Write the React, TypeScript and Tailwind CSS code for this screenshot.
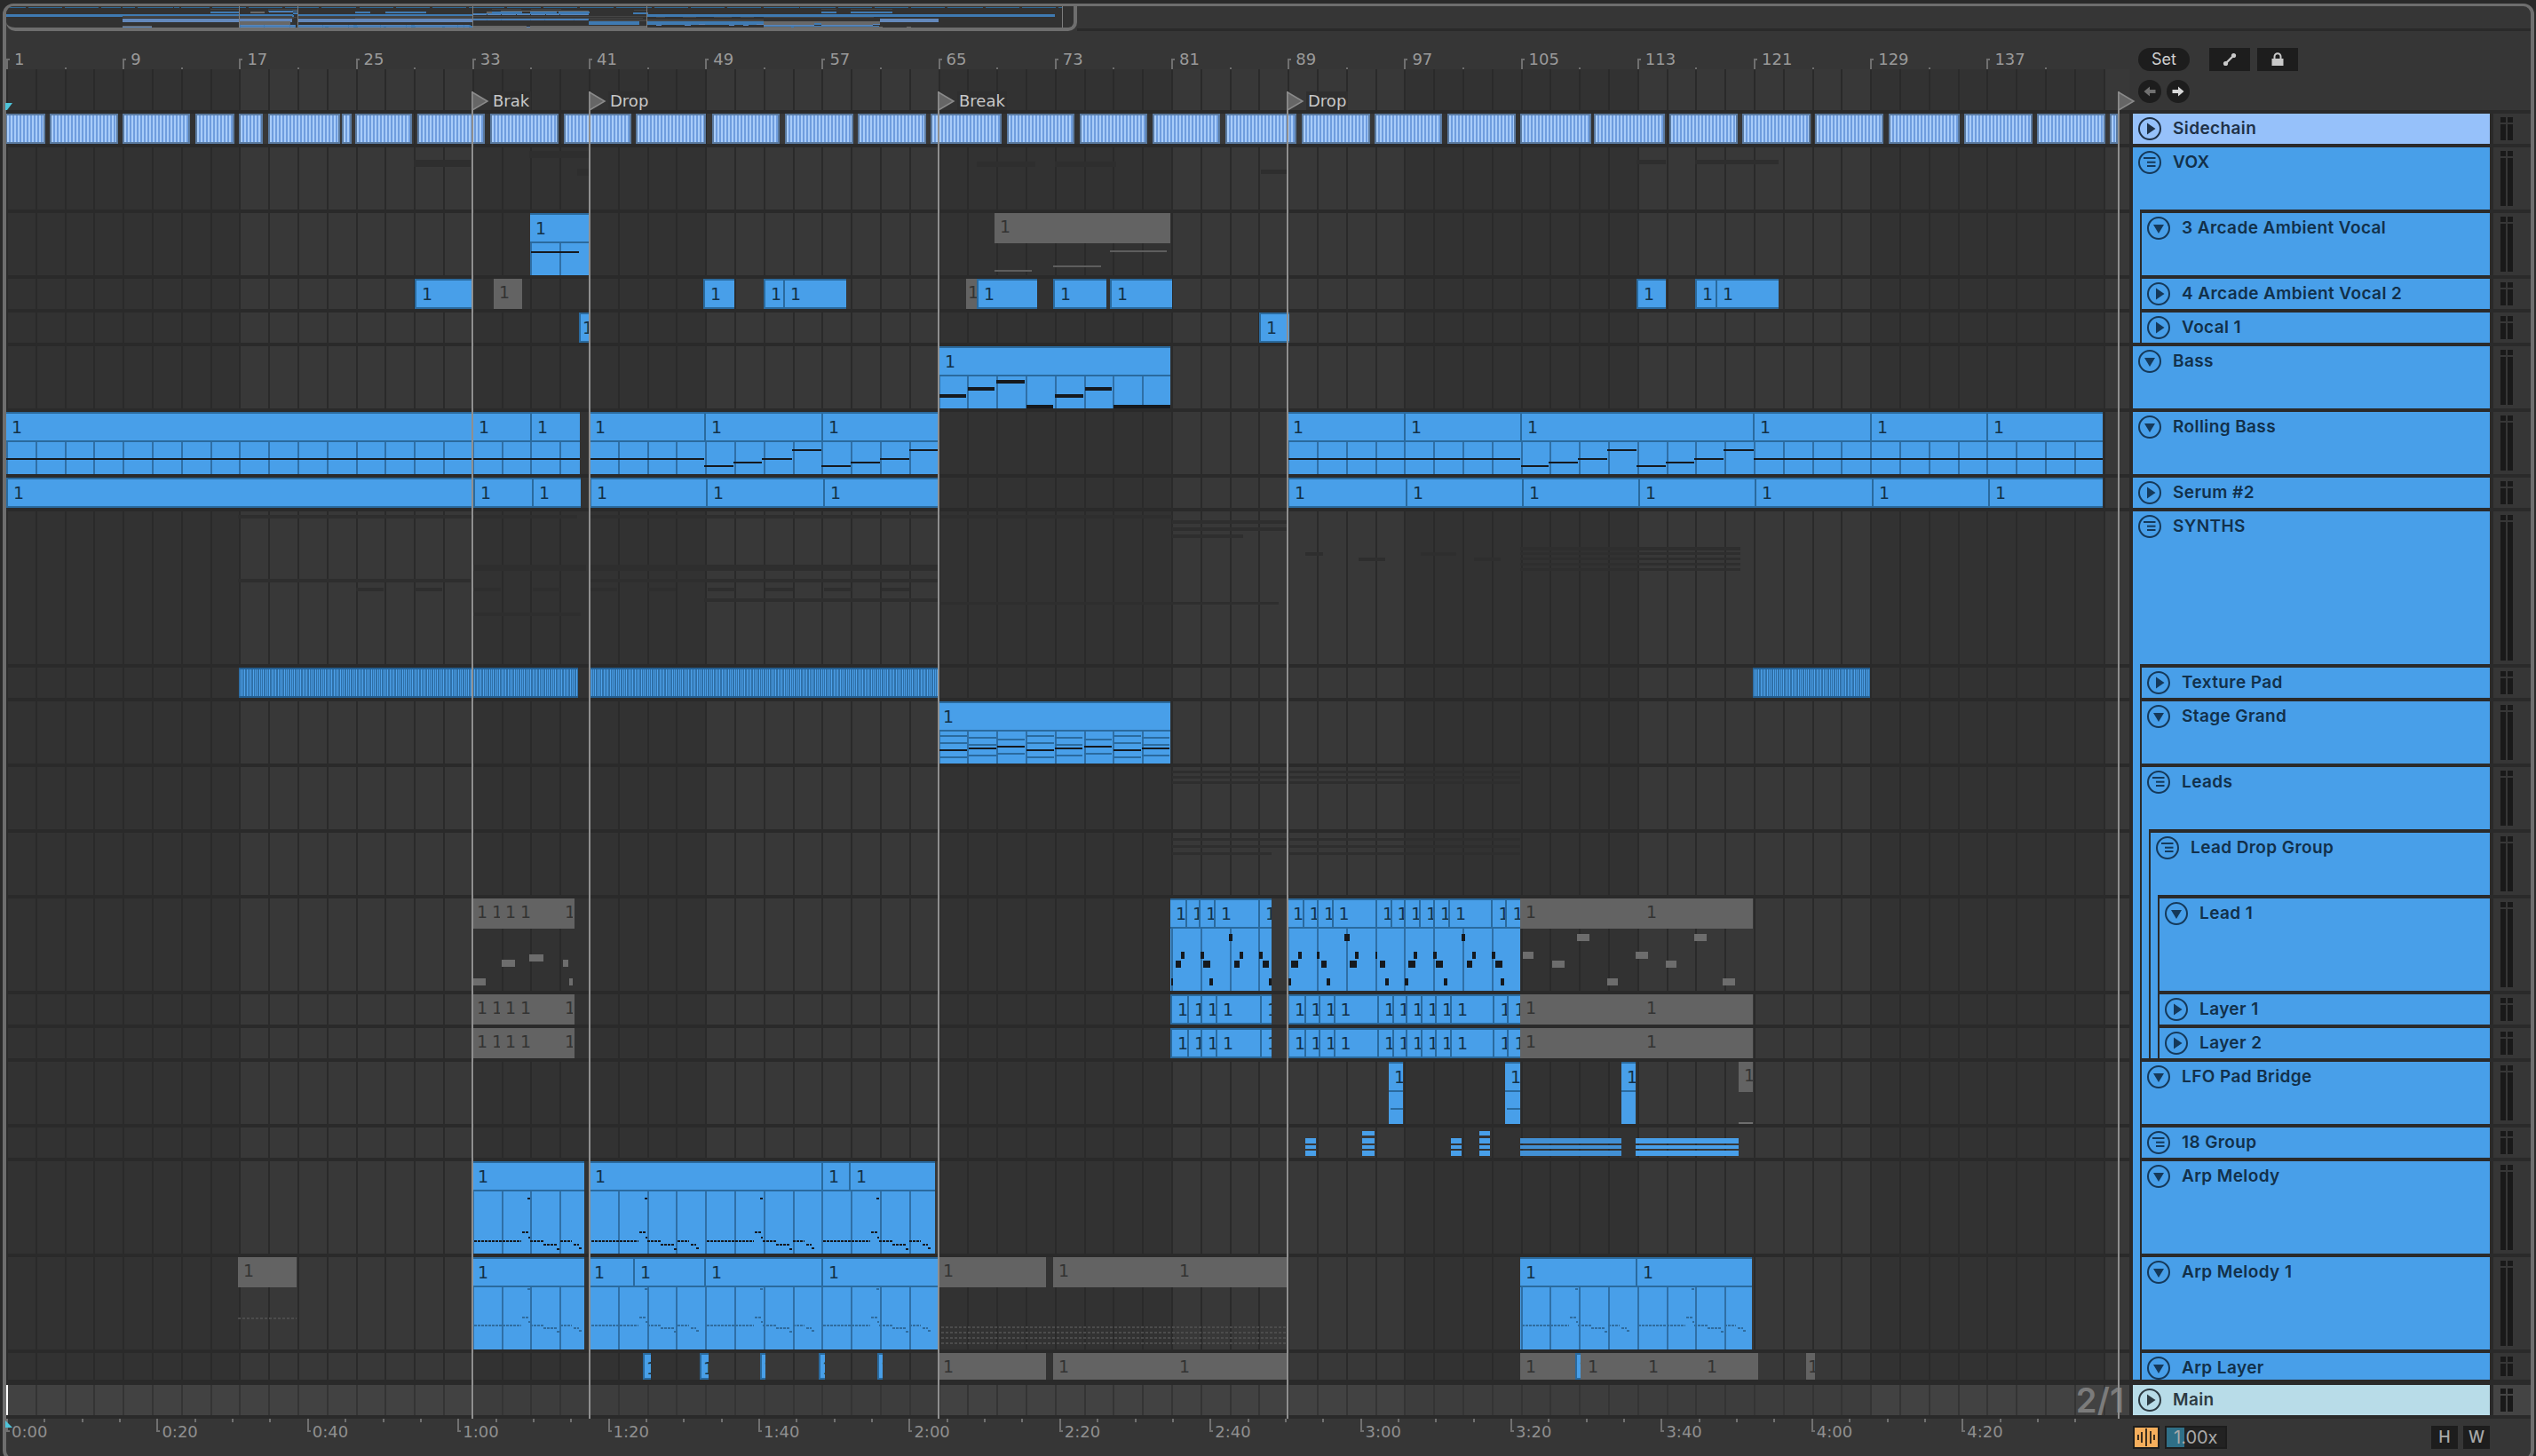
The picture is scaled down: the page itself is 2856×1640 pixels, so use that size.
import React from "react";

type Item =
  | { t: "c"; a: number; b: number; splits: number[]; gray: boolean }
  | { t: "n"; a: number; b: number; y: number; h: number; cls: string }
  | { t: "s"; a: number; b: number }
  | { t: "x"; a: number; b: number };

type Row = {
  name: string;
  h: number;
  level: number;
  icon: "play" | "down" | "group";
  sep?: number;
  tone?: "side" | "main";
  items: Item[];
};

const C = (a: number, b: number, splits: number[] = []): Item => ({ t: "c", a, b, splits, gray: false });
const G = (a: number, b: number, splits: number[] = []): Item => ({ t: "c", a, b, splits, gray: true });
const N = (a: number, b: number, y: number, h = 4, cls = "dark"): Item => ({ t: "n", a, b, y, h, cls });
const F = (a: number, b: number, y: number, h = 4): Item => N(a, b, y, h, "faint");
const S = (a: number, b: number): Item => ({ t: "s", a, b });
const X = (a: number, b: number): Item => ({ t: "x", a, b });

const noteCls: Record<string, string> = {
  dark: "bg-[#15191e]",
  gray: "bg-[#6d6d6d]",
  grayLine: "bg-[#5e5e5e]",
  faint: "bg-[#2e2e2e]",
  blue: "bg-[#489fe9]",
  blueDim: "bg-[#4290d4]",
  edge: "bg-[#2a6a9e]",
  dash: "bg-[repeating-linear-gradient(90deg,#15191e_0,#15191e_3px,transparent_3px,transparent_4px)]",
  dashFaint: "bg-[repeating-linear-gradient(90deg,#2f6c9f_0,#2f6c9f_3px,transparent_3px,transparent_4px)]",
  dashGray: "bg-[repeating-linear-gradient(90deg,#4c4c4c_0,#4c4c4c_3px,transparent_3px,transparent_5px)]",
};

const sidechainSegs = [
  [6, 51], [56, 133], [138, 214], [220, 264], [269, 296], [302, 383], [385, 396], [400, 464], [470, 546], [552, 629], [635, 711], [716, 795],
  [802, 878], [884, 961], [966, 1043], [1048, 1128], [1134, 1210], [1216, 1292], [1298, 1374], [1380, 1460], [1466, 1543], [1548, 1624],
  [1630, 1707], [1712, 1792], [1795, 1875], [1880, 1957], [1962, 2039], [2044, 2121], [2127, 2207], [2212, 2289], [2294, 2371], [2376, 2385],
];

const step = (list: [number, number, number][], h: number) => list.map(([a, b, y]) => N(a, b, y, h));

const rollingNotes = step(
  [
    [7, 653, 52], [664, 793, 52], [793, 826, 60], [826, 858, 56], [858, 892, 52], [892, 925, 42],
    [925, 958, 60], [958, 991, 56], [991, 1024, 52], [1024, 1056, 42],
    [1450, 1712, 52], [1713, 1744, 60], [1744, 1777, 56], [1777, 1810, 52], [1810, 1843, 42],
    [1843, 1876, 60], [1876, 1908, 56], [1908, 1941, 52], [1941, 1975, 42], [1975, 2368, 52],
  ],
  2
);

const leadY: Record<number, number> = { 228: 40, 288: 60, 318: 70, 378: 90 };
const leadPts: [number, number, number][] = [
  [45, 378, 2], [60, 318, 6], [72, 288, 4], [120, 288, 4], [133, 318, 8], [143, 378, 4], [192, 228, 4], [208, 318, 6], [219, 288, 4],
  [268, 288, 4], [280, 318, 7], [293, 378, 3], [340, 378, 4], [353, 318, 8], [368, 288, 4], [414, 288, 3], [428, 318, 6], [440, 378, 4],
  [486, 228, 6], [502, 318, 8], [510, 288, 4], [561, 288, 2], [575, 318, 6], [587, 378, 4], [636, 378, 4], [650, 318, 8], [658, 288, 4],
  [707, 288, 4], [720, 318, 8], [735, 378, 4], [779, 228, 4], [795, 318, 6], [806, 288, 4], [855, 288, 4], [868, 318, 8], [879, 378, 4],
];
const leadGray: [number, number, number][] = [
  [930, 288, 12], [1003, 318, 14], [1066, 228, 14], [1142, 378, 12], [1214, 288, 14], [1290, 318, 12], [1362, 228, 14], [1434, 378, 14],
];
const leadNotes: Item[] = [
  ...leadPts.map(([z, yy, w]) => {
    const x = 1300 + z / 2.24;
    return N(x - w / 2, x + w / 2, leadY[yy], 8, "dark");
  }),
  ...leadGray.map(([z, yy, w]) => {
    const x = 1300 + z / 2.24;
    return N(x, x + w, leadY[yy], 8, "gray");
  }),
  N(533, 547, 90, 8, "gray"), N(565, 580, 69, 8, "gray"), N(596, 612, 63, 8, "gray"), N(634, 640, 69, 8, "gray"), N(641, 645, 90, 8, "gray"),
];

const arpPattern: [number, number, number][] = [
  [2, 55, 89], [56, 63, 79], [62, 65, 41], [63, 65, 85], [65, 80, 89], [80, 95, 93], [95, 98, 98], [99, 112, 89], [114, 120, 93], [120, 124, 97],
];
const arp = (starts: number[], cls: string, k: number, max = 99999) =>
  starts.flatMap((s) =>
    arpPattern
      .filter(([a]) => s + a < max)
      .map(([a, b, y]) => N(s + a, Math.min(s + b, max), y * k, 2, cls))
  );

const leadSplitsA = [1335, 1350, 1367, 1417];
const leadSplitsB = [1466.5, 1483, 1499.5, 1549, 1565.6, 1581, 1598, 1614, 1631, 1679.5, 1695.5];
const leadGraySplits = [548, 563, 580, 630, 645];

const rows: Row[] = [
  { name: "Sidechain", h: 34, level: 0, icon: "play", tone: "side", items: sidechainSegs.map(([a, b]) => S(a, b)) },
  {
    name: "VOX", h: 70, level: 0, icon: "group",
    items: [F(596, 663, 4, 8), F(466, 530, 14, 8), F(650, 663, 24, 8), F(1100, 1166, 16, 6), F(1188, 1257, 16, 6), F(1843, 1876, 14, 5), F(1909, 2003, 14, 5), F(1420, 1450, 25, 5)],
  },
  {
    name: "3 Arcade Ambient Vocal", h: 70, level: 1, icon: "down",
    items: [C(597, 663), N(598, 652, 43, 2), G(1120, 1318), N(1250, 1314, 42, 2, "grayLine"), N(1186, 1240, 59, 2, "grayLine"), N(1120, 1162, 64, 2, "grayLine")],
  },
  {
    name: "4 Arcade Ambient Vocal 2", h: 34, level: 1, icon: "play",
    items: [C(467, 531), G(556, 588), C(792, 827), C(860, 882), C(882, 953), G(1088, 1100), C(1100, 1168), C(1186, 1246), C(1250, 1320), C(1843, 1876), C(1909, 1932), C(1932, 2003)],
  },
  { name: "Vocal 1", h: 34, level: 1, icon: "play", items: [C(652, 663), C(1418, 1452)] },
  {
    name: "Bass", h: 70, level: 0, icon: "down",
    items: [
      C(1058, 1318),
      ...step([[1058, 1088, 54], [1090, 1120, 46], [1122, 1154, 38], [1156, 1186, 66], [1188, 1220, 54], [1222, 1252, 46], [1254, 1318, 66]], 4),
    ],
  },
  {
    name: "Rolling Bass", h: 70, level: 0, icon: "down",
    items: [C(7, 653, [531, 597]), C(664, 1056, [793, 925]), C(1450, 2368, [1581, 1712, 1974, 2106, 2237]), ...rollingNotes],
  },
  {
    name: "Serum #2", h: 34, level: 0, icon: "play",
    items: [C(7, 654, [531, 597]), C(664, 1056, [793, 925]), C(1450, 2368, [1581, 1712, 1843, 1974, 2106, 2237])],
  },
  {
    name: "SYNTHS", h: 172, level: 0, icon: "group",
    items: [
      F(268, 650, 4), F(664, 1056, 4), F(531, 660, 60, 7), F(664, 1056, 60, 7), F(268, 530, 76), F(664, 1056, 76),
      ...[401, 467, 533, 600, 664, 730, 797, 862, 928, 993].map((x) => F(x, x + 31, 86)),
      F(793, 1056, 98), F(531, 654, 114),
      F(1320, 1450, 10), F(1320, 1450, 18), F(1320, 1400, 26), F(1056, 1320, 4),
      F(1470, 1490, 46), F(1530, 1560, 52), F(1600, 1640, 46), F(1660, 1690, 52),
      F(1712, 1960, 40), F(1712, 1960, 46, 3), F(1712, 1960, 52, 3), F(1712, 1960, 58, 3), F(1712, 1960, 64, 3),
      F(1056, 1440, 102, 3),
    ],
  },
  { name: "Texture Pad", h: 34, level: 1, icon: "play", items: [X(269, 651), X(664, 1056), X(1974, 2106)] },
  {
    name: "Stage Grand", h: 70, level: 1, icon: "down",
    items: [
      C(1056, 1318),
      ...[0, 1, 2, 3, 4, 5, 6, 7].flatMap((i) => {
        const a = 1058 + i * 32.6;
        const d = [0, 2, 4, 0, 2, 4, 0, 2][i];
        return [N(a, a + 31, 38 + d, 2, "edge"), N(a, a + 31, 46 + d, 2, "edge"), N(a, a + 31, 54 - d, 2, "dark"), N(a, a + 31, 62 - d, 2, "edge")];
      }),
    ],
  },
  { name: "Leads", h: 70, level: 1, icon: "group", items: [F(1320, 1712, 4, 3), F(1320, 1712, 10, 3), F(1320, 1712, 16, 3)] },
  { name: "Lead Drop Group", h: 70, level: 2, icon: "group", items: [F(1320, 1712, 6, 3), F(1320, 1712, 14, 3), F(1320, 1432, 22, 3), F(1450, 1712, 22, 3)] },
  {
    name: "Lead 1", h: 104, level: 3, icon: "down",
    items: [G(531, 647, leadGraySplits), C(1318, 1432, leadSplitsA), C(1450, 1712, leadSplitsB), G(1712, 1974, [1848]), ...leadNotes],
  },
  {
    name: "Layer 1", h: 34, level: 3, icon: "play",
    items: [G(531, 647, leadGraySplits), C(1318, 1432, leadSplitsA), C(1450, 1712, leadSplitsB), G(1712, 1974, [1848])],
  },
  {
    name: "Layer 2", h: 34, level: 3, icon: "play",
    items: [G(531, 647, leadGraySplits), C(1318, 1432, leadSplitsA), C(1450, 1712, leadSplitsB), G(1712, 1974, [1848])],
  },
  {
    name: "LFO Pad Bridge", h: 70, level: 1, icon: "down",
    items: [C(1564, 1580), N(1566, 1580, 52, 2, "edge"), C(1695, 1712), N(1697, 1712, 52, 2, "edge"), C(1826, 1842), G(1958, 1974), N(1958, 1974, 68, 2, "gray")],
  },
  {
    name: "18 Group", h: 34, level: 1, icon: "group",
    items: [
      ...[[1470, 1482], [1634, 1646]].flatMap(([a, b]) => [N(a, b, 12, 6, "blue"), N(a, b, 20, 4, "blue"), N(a, b, 26, 6, "blue")]),
      ...[[1534, 1548], [1666, 1678]].flatMap(([a, b]) => [N(a, b, 4, 5, "blue"), N(a, b, 12, 6, "blue"), N(a, b, 20, 4, "blue"), N(a, b, 26, 6, "blue")]),
      N(1712, 1826, 12, 6, "blueDim"), N(1712, 1826, 20, 4, "blueDim"), N(1712, 1826, 26, 6, "blueDim"),
      N(1842, 1958, 12, 6, "blue"), N(1842, 1958, 20, 4, "blue"), N(1842, 1958, 26, 6, "blue"),
    ],
  },
  {
    name: "Arp Melody", h: 104, level: 1, icon: "down",
    items: [C(532, 658), C(664, 1053, [925, 956]), ...arp([532], "dash", 1, 658), ...arp([664, 794, 925], "dash", 1, 1053)],
  },
  {
    name: "Arp Melody 1", h: 104, level: 1, icon: "down",
    items: [
      C(532, 658), C(663, 1056, [713, 793, 925]), G(268, 334), N(268, 334, 68, 2, "dashGray"),
      G(1056, 1178), G(1186, 1450, [1322]), C(1712, 1973, [1842]),
      ...arp([532], "dashFaint", 0.85, 658), ...arp([664, 794, 925], "dashFaint", 0.85, 1056), ...arp([1712, 1843], "dashFaint", 0.85, 1973),
      N(1060, 1450, 78, 2, "dashGray"), N(1060, 1450, 84, 2, "dashGray"), N(1060, 1450, 90, 2, "dashGray"), N(1060, 1450, 96, 2, "dashGray"),
    ],
  },
  {
    name: "Arp Layer", h: 30, level: 1, icon: "down",
    items: [
      C(724, 733), C(788, 798), C(856, 862), C(922, 929), C(988, 994),
      G(1056, 1178), G(1186, 1450, [1322]), G(1712, 1980, [1782, 1850, 1916]), C(1774, 1780), G(2034, 2044),
    ],
  },
  { name: "Main", h: 34, level: 0, icon: "play", sep: 6, tone: "main", items: [] },
];

const bars = [1, 9, 17, 25, 33, 41, 49, 57, 65, 73, 81, 89, 97, 105, 113, 121, 129, 137];
const times = ["0:00", "0:20", "0:40", "1:00", "1:20", "1:40", "2:00", "2:20", "2:40", "3:00", "3:20", "3:40", "4:00", "4:20"];
const locators = [
  { x: 531, label: "Brak" },
  { x: 663, label: "Drop" },
  { x: 1056, label: "Break" },
  { x: 1449, label: "Drop" },
  { x: 2385, label: "" },
];

function overviewBars() {
  const out: { x: number; w: number; y: number; h: number; cls: string }[] = [];
  let top = 0;
  const total = 1466;
  const map = (v: number) => 1 + 23 * Math.pow(Math.max(v, 0) / total, 0.7);
  rows.forEach((r, i) => {
    if (i > 0) top += r.sep ?? 4;
    r.items.forEach((it) => {
      const w = (it.b - it.a) * 0.5;
      const x = (it.a - 7) * 0.5;
      const y = map(top);
      if (it.t === "c") out.push({ x, w, y, h: 1.6, cls: it.gray ? "bg-[#686868]" : "bg-[#3f7ab2]" });
      if (it.t === "s") out.push({ x, w, y, h: 1, cls: "bg-[#2f6896]" });
      if (it.t === "x") out.push({ x, w, y, h: 4, cls: "bg-[#6388bb]" });
      if (it.t === "n" && it.cls !== "faint") out.push({ x, w, y: y + 0.7, h: 1, cls: "bg-[#5a86bc]" });
      if (it.t === "n" && it.cls === "faint") out.push({ x, w, y: map(top + it.y), h: 1, cls: "bg-[#454545]" });
    });
    top += r.h;
  });
  return out;
}

function TrackIcon({ kind, color }: { kind: Row["icon"]; color: string }) {
  return (
    <svg width="26" height="26" viewBox="0 0 26 26" className="flex-none" fill="none" stroke={color} strokeWidth="2">
      <circle cx="13" cy="13" r="12" />
      {kind === "play" && <polygon points="10,6.5 19.5,13 10,19.5" fill={color} stroke="none" />}
      {kind === "down" && <polygon points="7,9 19,9 13,19" fill={color} stroke="none" />}
      {kind === "group" && (
        <g>
          <line x1="6" y1="8" x2="19.5" y2="8" />
          <line x1="10" y1="12.7" x2="19.5" y2="12.7" />
          <line x1="10" y1="17" x2="19.5" y2="17" />
        </g>
      )}
    </svg>
  );
}

function ClipView({ item, rowH }: { item: Extract<Item, { t: "c" }>; rowH: number }) {
  const pts = [item.a, ...item.splits, item.b];
  const tall = rowH > 34;
  return (
    <div
      className={
        item.gray
          ? "absolute top-0 h-[34px] max-h-full bg-[#636363] flex overflow-hidden"
          : "absolute top-0 bottom-0 bg-[#489fe9] overflow-hidden"
      }
      style={{ left: item.a - 7, width: item.b - item.a }}
    >
      {!item.gray && tall && (
        <div className="absolute left-0 right-0 top-[34px] bottom-0 overflow-hidden">
          <div
            className="absolute top-0 bottom-0 w-[2400px] bg-[repeating-linear-gradient(90deg,#2f6fa6_0,#2f6fa6_2px,transparent_2px,transparent_32.8px)]"
            style={{ left: 7 - item.a }}
          />
        </div>
      )}
      <div
        className={
          item.gray
            ? "flex h-full"
            : tall
            ? "flex h-[34px] border-t-2 border-b-2 border-[#2a6a9e] relative"
            : "flex h-full border-t-2 border-b-2 border-l-2 border-[#2a6a9e] relative"
        }
      >
        {pts.slice(0, -1).map((p, i) => {
          const w = pts[i + 1] - p;
          return (
            <div
              key={i}
              className={
                (item.gray ? "text-[#333333] " : "text-[#133149] ") +
                (w < 14 ? "pl-[2px] " : "pl-[6px] ") +
                "flex-none overflow-hidden whitespace-nowrap text-[19px] leading-[30px] font-['DejaVu_Sans',sans-serif] " +
                (i > 0 && !item.gray ? "border-l-2 border-[#2a6a9e]" : "")
              }
              style={{ width: w }}
            >
              1
            </div>
          );
        })}
      </div>
    </div>
  );
}

function ArrangementItem({ item, rowH }: { item: Item; rowH: number }) {
  if (item.t === "c") return <ClipView item={item} rowH={rowH} />;
  if (item.t === "n")
    return (
      <div
        className={"absolute " + noteCls[item.cls]}
        style={{ left: item.a - 7, width: item.b - item.a, top: item.y, height: item.h }}
      />
    );
  if (item.t === "s")
    return (
      <div
        className="absolute top-0 bottom-0 border-y-2 border-x-2 border-[#5a7aa0] bg-[repeating-linear-gradient(90deg,#a8ccf9_0,#a8ccf9_2px,#6f9dde_2px,#6f9dde_4px)]"
        style={{ left: item.a - 7, width: item.b - item.a }}
      />
    );
  return (
    <div
      className="absolute top-0 bottom-0 border-y-2 border-[#245f92] bg-[repeating-linear-gradient(90deg,#2f70a8_0,#2f70a8_2px,#4fa3ec_2px,#4fa3ec_3px,#2f70a8_3px,#2f70a8_4px,#4596dc_4px,#4596dc_5px,#2f70a8_5px,#2f70a8_6px,#4fa3ec_6px,#4fa3ec_7px)]"
      style={{ left: item.a - 7, width: item.b - item.a }}
    />
  );
}

function Strips({ level }: { level: number }) {
  return (
    <>
      {Array.from({ length: level }).map((_, i) => (
        <React.Fragment key={i}>
          <div className="w-2 flex-none bg-[#489fe9]" />
          <div className="w-0.5 flex-none bg-[#2a2a2a]" />
        </React.Fragment>
      ))}
    </>
  );
}

function TrackRow({ row, first }: { row: Row; first: boolean }) {
  const sepH = row.sep ?? 4;
  const headerBg = row.tone === "side" ? "bg-[#96c1fa]" : row.tone === "main" ? "bg-[#b8dce8]" : "bg-[#489fe9]";
  const textCol = row.tone === "side" ? "text-[#1f3147]" : row.tone === "main" ? "text-[#2d3a42]" : "text-[#12304a]";
  const iconCol = row.tone === "side" ? "#1f3147" : row.tone === "main" ? "#2d3a42" : "#15395a";
  const grid =
    row.tone === "main"
      ? "bg-[repeating-linear-gradient(90deg,#343434_0,#343434_2px,transparent_2px,transparent_32.8px),repeating-linear-gradient(90deg,#424242_0,#424242_524.8px,#3d3d3d_524.8px,#3d3d3d_1049.6px)]"
      : "bg-[repeating-linear-gradient(90deg,#2a2a2a_0,#2a2a2a_2px,transparent_2px,transparent_32.8px),repeating-linear-gradient(90deg,#323232_0,#323232_262.4px,#383838_262.4px,#383838_524.8px)]";
  return (
    <>
      <div className="flex flex-none bg-[#2a2a2a]" style={{ height: sepH }}>
        <div className="w-[2395px] flex-none" />
        {!first && <Strips level={row.level} />}
      </div>
      <div className="flex flex-none bg-[#2a2a2a] overflow-hidden" style={{ height: row.h }}>
        <div className={"relative w-[2391px] flex-none overflow-hidden " + grid}>
          {row.items.map((it, i) => (
            <ArrangementItem key={i} item={it} rowH={row.h} />
          ))}
          {row.tone === "main" && (
            <div className="absolute right-[6px] top-0 text-[38px] leading-[34px] font-semibold text-[#7b7b7b] font-['Inter',sans-serif] whitespace-nowrap">
              2/1
            </div>
          )}
        </div>
        <div className="w-1 flex-none" />
        <div className="w-[402px] flex-none flex">
          <Strips level={row.level} />
          <div className={"flex-1 flex items-start pl-1.5 pt-1 " + headerBg}>
            <TrackIcon kind={row.icon} color={iconCol} />
            <span
              className={
                "ml-[13px] -mt-1 text-[19px] leading-[34px] font-semibold tracking-[0.4px] whitespace-nowrap font-['Inter',sans-serif] " + textCol
              }
            >
              {row.name}
            </span>
          </div>
        </div>
        <div className="w-1 flex-none" />
        <div className={"w-[42px] flex-none flex gap-0.5 pl-2 py-1 " + (row.tone === "main" ? "bg-[#444444]" : "bg-[#363636]")}>
          {[0, 1].map((k) => (
            <div key={k} className="w-1.5 flex flex-col gap-[2px]">
              <div className="h-[6px] flex-none bg-[#191919]" />
              <div className="flex-1 bg-[#191919]" />
            </div>
          ))}
        </div>
      </div>
    </>
  );
}

function BarRuler() {
  return (
    <div className="relative h-[43px] flex-none">
      {bars.map((b) => {
        const x = (b - 1) * 16.4;
        return (
          <React.Fragment key={b}>
            <div className="absolute top-[31px] h-[12px] w-[2px] bg-[#6f6f6f]" style={{ left: x }} />
            <div className="absolute top-[31px] h-[2px] w-[4px] bg-[#6f6f6f]" style={{ left: x }} />
            <div className="absolute top-[41px] h-[2px] w-[2px] bg-[#6f6f6f]" style={{ left: x + 65.6 }} />
            <div
              className="absolute top-[21px] text-[18px] leading-[22px] text-[#9a9a9a] font-['DejaVu_Sans',sans-serif]"
              style={{ left: x + 9 }}
            >
              {b}
            </div>
          </React.Fragment>
        );
      })}
    </div>
  );
}

function TimeRuler() {
  const small = Array.from({ length: 56 }, (_, i) => i).filter((i) => i % 4 !== 0);
  return (
    <div className="relative w-[2391px] flex-none overflow-hidden">
      {small.map((i) => (
        <div key={i} className="absolute top-0 h-[4px] w-[2px] bg-[#707070]" style={{ left: i * 42.35 }} />
      ))}
      {times.map((t, i) => {
        const x = i * 169.4;
        return (
          <React.Fragment key={t}>
            <div className="absolute top-0 h-[14px] w-[2px] bg-[#707070]" style={{ left: x }} />
            <div className="absolute top-[13px] h-[2px] w-[4px] bg-[#707070]" style={{ left: x }} />
            <div
              className="absolute top-[3px] text-[18px] leading-[24px] text-[#8f8f8f] font-['DejaVu_Sans',sans-serif]"
              style={{ left: x + 6 }}
            >
              {t}
            </div>
          </React.Fragment>
        );
      })}
    </div>
  );
}

function Overview() {
  return (
    <div className="flex h-[28px] flex-none">
      <div className="relative w-[1206px] flex-none overflow-hidden rounded-b-[10px] border-r-4 border-b-4 border-[#6e6e6e] bg-[#323232]">
        {overviewBars().map((b, i) => (
          <div key={i} className={"absolute " + b.cls} style={{ left: b.x, width: b.w, top: b.y, height: b.h }} />
        ))}
        {locators.map((l) => (
          <div key={l.x} className="absolute top-0 bottom-0 w-px bg-[#7d7d7d]" style={{ left: (l.x - 7) * 0.5 }} />
        ))}
      </div>
      <div className="flex-1 border-b-[3px] border-[#2a2a2a]" />
    </div>
  );
}

function ControlPanel() {
  return (
    <div className="flex-1 flex flex-col pl-[10px] pt-[19px]">
      <div className="flex items-center">
        <div className="w-[58px] h-[26px] rounded-full bg-[#1d1d1d] text-[#cfcfcf] text-[18px] leading-[26px] text-center font-['Inter',sans-serif]">
          Set
        </div>
        <div className="ml-[22px] w-[46px] h-[26px] bg-[#1d1d1d] flex items-center justify-center">
          <svg width="16" height="16" viewBox="0 0 16 16" fill="#c9c9c9" stroke="#c9c9c9">
            <line x1="3.5" y1="12.5" x2="12.5" y2="3.5" strokeWidth="2.4" />
            <circle cx="3.5" cy="12.5" r="2.6" stroke="none" />
            <circle cx="12.5" cy="3.5" r="2.6" stroke="none" />
          </svg>
        </div>
        <div className="ml-2 w-[46px] h-[26px] bg-[#1d1d1d] flex items-center justify-center">
          <svg width="16" height="16" viewBox="0 0 16 16" fill="#c9c9c9">
            <rect x="1.5" y="7" width="13" height="8" />
            <path d="M4.5 7V4.8a3.5 3.5 0 0 1 7 0V7" fill="none" stroke="#c9c9c9" strokeWidth="2" />
          </svg>
        </div>
      </div>
      <div className="flex items-center gap-[6px] mt-[10px]">
        <div className="w-[26px] h-[26px] rounded-full bg-[#1d1d1d] flex items-center justify-center">
          <svg width="16" height="16" viewBox="0 0 16 16" fill="#707070">
            <polygon points="1.5,8 8,2.5 8,6 14.5,6 14.5,10 8,10 8,13.5" />
          </svg>
        </div>
        <div className="w-[26px] h-[26px] rounded-full bg-[#1d1d1d] flex items-center justify-center">
          <svg width="16" height="16" viewBox="0 0 16 16" fill="#d8d8d8">
            <polygon points="14.5,8 8,2.5 8,6 1.5,6 1.5,10 8,10 8,13.5" />
          </svg>
        </div>
      </div>
    </div>
  );
}

function BottomBar() {
  return (
    <div className="flex-1 flex h-[42px]">
      <TimeRuler />
      <div className="flex-1 flex items-start pt-2 pl-1">
        <div className="w-[30px] h-[26px] border-2 border-[#1d1d1d] bg-[#f5ae5c] flex items-center justify-center">
          <svg width="24" height="20" viewBox="0 0 24 20" stroke="#2a2118" strokeWidth="1.8">
            <line x1="3" y1="7" x2="3" y2="13" />
            <line x1="7" y1="4" x2="7" y2="16" />
            <line x1="12" y1="0" x2="12" y2="20" />
            <line x1="17" y1="3" x2="17" y2="17" />
            <line x1="21" y1="7" x2="21" y2="13" />
          </svg>
        </div>
        <div className="relative ml-[6px] w-[70px] h-[26px] border-2 border-[#1d1d1d] bg-[#222222] text-[#a9a9a9] text-[20px] leading-[22px] pl-2 font-['Inter',sans-serif]">
          <div className="absolute left-0 top-0 bottom-0 w-[20px] bg-[#2f6f87]" />
          <span className="relative">1.00x</span>
        </div>
        <div className="ml-auto w-[30px] h-[26px] bg-[#1d1d1d] text-[#a9a9a9] text-[18px] leading-[26px] font-medium text-center font-['Inter',sans-serif]">H</div>
        <div className="ml-[6px] mr-[46px] w-[30px] h-[26px] bg-[#1d1d1d] text-[#a9a9a9] text-[18px] leading-[26px] font-medium text-center font-['Inter',sans-serif]">W</div>
      </div>
    </div>
  );
}

export default function App() {
  return (
    <div className="relative w-[2856px] h-[1640px] overflow-hidden bg-[#2a2a2a] pt-1 pl-[3px] pr-[2px]">
      <div className="h-[1642px] rounded-[12px] border-x-4 border-t-[3px] border-b-4 border-[#6e6e6e] bg-[#363636] flex flex-col overflow-hidden">
        <Overview />
        <div className="flex h-[89px] flex-none">
          <div className="w-[2391px] flex-none flex flex-col">
            <BarRuler />
            <div className="flex-1 bg-[repeating-linear-gradient(90deg,#2a2a2a_0,#2a2a2a_2px,transparent_2px,transparent_32.8px),repeating-linear-gradient(90deg,#323232_0,#323232_262.4px,#383838_262.4px,#383838_524.8px)]" />
          </div>
          <ControlPanel />
        </div>
        {rows.map((r, i) => (
          <TrackRow key={r.name} row={r} first={i === 0} />
        ))}
        <div className="h-1 flex-none bg-[#2a2a2a]" />
        <BottomBar />
      </div>

      {locators.map((l) => (
        <div key={l.x} className="absolute top-[103px] h-[1495px] w-[2px] bg-[#8f8f8f]" style={{ left: l.x }} />
      ))}
      {locators.map((l) => (
        <div key={l.x} className="absolute top-[103px] h-[21px] flex items-stretch" style={{ left: l.x }}>
          <svg width="20" height="21" viewBox="0 0 20 21" className="flex-none">
            <polygon points="1,1 18,11 1,21" fill="#666666" stroke="#8a8a8a" strokeWidth="1.5" />
          </svg>
          {l.label && (
            <div className="ml-[2px] px-[2px] bg-[#2f2f2f] text-[#c8c8c8] text-[18px] leading-[21px] font-['DejaVu_Sans',sans-serif]">
              {l.label}
            </div>
          )}
        </div>
      ))}
      <svg width="8" height="8" viewBox="0 0 8 8" className="absolute left-[6px] top-[116px]">
        <polygon points="0,0 8,0 2,8 0,8" fill="#4ec3d9" />
      </svg>
      <svg width="8" height="8" viewBox="0 0 8 8" className="absolute left-[6px] top-[1600px]">
        <polygon points="0,0 8,8 0,8" fill="#4ec3d9" />
      </svg>
      <div className="absolute left-[7px] top-[1560px] h-[34px] w-[2px] bg-white" />
    </div>
  );
}
